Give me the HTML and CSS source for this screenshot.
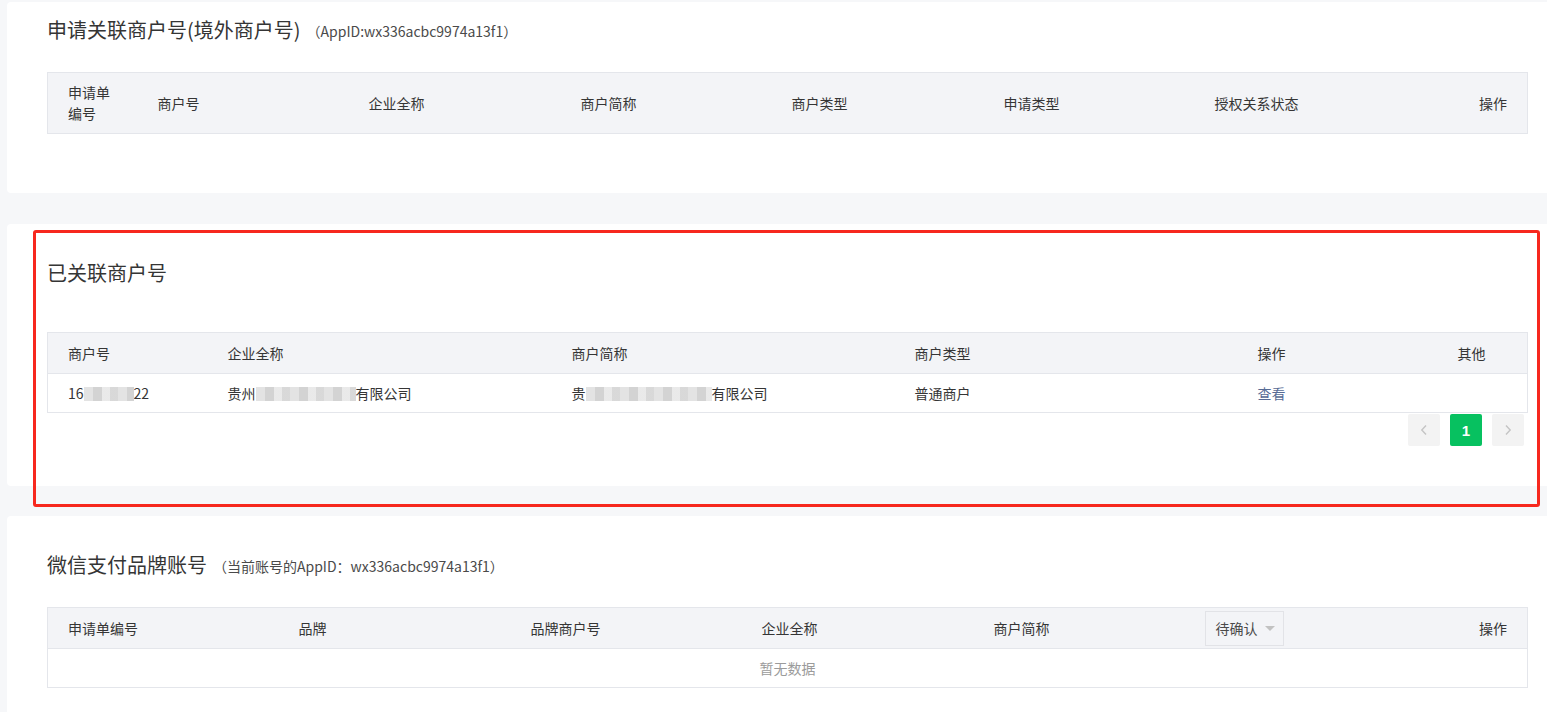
FILE: index.html
```html
<!DOCTYPE html>
<html lang="zh-CN">
<head>
    <meta charset="UTF-8">
    <meta name="viewport" content="width=device-width, initial-scale=1.0">
    <title>商户号管理</title>
    <link rel="stylesheet" href="styles.css">
</head>
<body>
    <div class="page">
        <!-- 申请关联 (境外) -->
        <div class="card card-first">
            <h2 class="card-title">申请关联商户号(境外商户号)<span class="sub">（AppID:wx336acbc9974a13f1）</span></h2>
            <table class="data-table">
                <colgroup>
                    <col style="width:90px">
                    <col style="width:211px">
                    <col style="width:212px">
                    <col style="width:211px">
                    <col style="width:212px">
                    <col style="width:211px">
                    <col style="width:212px">
                    <col>
                </colgroup>
                <thead>
                    <tr>
                        <th class="two-line">申请单编号</th>
                        <th>商户号</th>
                        <th>企业全称</th>
                        <th>商户简称</th>
                        <th>商户类型</th>
                        <th>申请类型</th>
                        <th>授权关系状态</th>
                        <th class="right">操作</th>
                    </tr>
                </thead>
            </table>
        </div>

        <!-- 已关联 -->
        <div class="card card-linked">
            <h2 class="card-title">已关联商户号</h2>
            <table class="data-table">
                <colgroup>
                    <col style="width:160px">
                    <col style="width:344px">
                    <col style="width:343px">
                    <col style="width:343px">
                    <col style="width:200px">
                    <col>
                </colgroup>
                <thead>
                    <tr>
                        <th>商户号</th>
                        <th>企业全称</th>
                        <th>商户简称</th>
                        <th>商户类型</th>
                        <th>操作</th>
                        <th>其他</th>
                    </tr>
                </thead>
                <tbody>
                    <tr>
                        <td>16<span class="blur" style="width:50px"></span>22</td>
                        <td>贵州<span class="blur" style="width:100px"></span>有限公司</td>
                        <td>贵<span class="blur" style="width:126px"></span>有限公司</td>
                        <td>普通商户</td>
                        <td><a href="#" class="link">查看</a></td>
                        <td></td>
                    </tr>
                </tbody>
            </table>
            <div class="pager">
                <button class="pager-btn" disabled>
                    <svg width="8" height="12" viewBox="0 0 8 12"><path d="M6 1.5 1.8 6 6 10.5" fill="none" stroke="#c4c4c4" stroke-width="1.4"/></svg>
                </button>
                <button class="pager-btn active">1</button>
                <button class="pager-btn" disabled>
                    <svg width="8" height="12" viewBox="0 0 8 12"><path d="M2 1.5 6.2 6 2 10.5" fill="none" stroke="#c4c4c4" stroke-width="1.4"/></svg>
                </button>
            </div>
        </div>

        <!-- 品牌账号 -->
        <div class="card card-brand">
            <h2 class="card-title">微信支付品牌账号<span class="sub">（当前账号的AppID：wx336acbc9974a13f1）</span></h2>
            <table class="data-table">
                <colgroup>
                    <col style="width:231px">
                    <col style="width:232px">
                    <col style="width:231px">
                    <col style="width:232px">
                    <col style="width:231px">
                    <col style="width:232px">
                    <col>
                </colgroup>
                <thead>
                    <tr>
                        <th>申请单编号</th>
                        <th>品牌</th>
                        <th>品牌商户号</th>
                        <th>企业全称</th>
                        <th>商户简称</th>
                        <th class="select-cell">
                            <span class="status-select">待确认<i class="caret"></i></span>
                        </th>
                        <th class="right">操作</th>
                    </tr>
                </thead>
                <tbody>
                    <tr>
                        <td colspan="7" class="empty">暂无数据</td>
                    </tr>
                </tbody>
            </table>
        </div>

        <div class="mark-box"></div>
    </div>
</body>
</html>
```

FILE: styles.css
```css
html, body {
    margin: 0;
    height: 100%;
    overflow: hidden;
}

body {
    background: #f6f7f9;
    font-family: "Noto Sans CJK SC", "Liberation Sans", sans-serif;
    color: #353535;
    font-size: 14px;
}

.page {
    position: relative;
    padding: 2px 0 0 7px;
    margin-right: -21px;
}

.card {
    background: #fff;
    border-radius: 4px;
    padding: 0 40px;
    margin-bottom: 30px;
}

.card-first {
    padding-top: 14px;
    height: 177px;
    margin-bottom: 31px;
}

.card-linked {
    padding-top: 35px;
    padding-bottom: 40px;
}

.card-brand {
    padding-top: 35px;
    padding-bottom: 40px;
}

.card-title {
    margin: 0 0 27px;
    font-size: 20px;
    font-weight: normal;
    line-height: 28px;
    color: #353535;
}

.card-linked .card-title {
    margin-bottom: 45px;
}

.card-title .sub {
    margin-left: 6px;
    font-size: 14px;
    color: #4a4a4a;
    vertical-align: 1px;
}

.data-table {
    width: 100%;
    table-layout: fixed;
    border-collapse: collapse;
    border: 1px solid #e4e6eb;
}

.data-table th {
    background: #f3f4f7;
    font-weight: normal;
    text-align: left;
    padding: 10px 20px;
    line-height: 20px;
    color: #353535;
    border-bottom: 1px solid #e4e6eb;
}

.data-table th.two-line {
    padding-top: 9px;
    padding-bottom: 9px;
    line-height: 21px;
}

.data-table .right {
    text-align: right;
}

.data-table td {
    padding: 9px 20px;
    line-height: 20px;
    white-space: nowrap;
    overflow: hidden;
}

.blur {
    display: inline-block;
    height: 14px;
    vertical-align: -2px;
    background: repeating-linear-gradient(90deg, #dcdcdc 0 9px, #c8c8c8 9px 18px, #e4e4e4 18px 26px, #cfcfcf 26px 34px);
    opacity: 0.8;
}

.link {
    color: #576b95;
    text-decoration: none;
}

.select-cell {
    padding-left: 0 !important;
}

.status-select {
    display: inline-block;
    box-sizing: border-box;
    width: 79px;
    height: 35px;
    line-height: 33px;
    padding-left: 10px;
    border: 1px solid #e2e3e7;
    color: #4a4a4a;
    margin: -8px 0;
}

.caret {
    display: inline-block;
    margin-left: 7px;
    width: 0;
    height: 0;
    border-left: 5px solid transparent;
    border-right: 5px solid transparent;
    border-top: 5px solid #c2c2c2;
    vertical-align: 3px;
}

.empty {
    text-align: center;
    color: #9b9b9b;
}

.pager {
    display: flex;
    justify-content: flex-end;
    gap: 10px;
    margin-top: 1px;
    padding-right: 4px;
}

.pager-btn {
    width: 32px;
    height: 32px;
    border: none;
    border-radius: 2px;
    background: #f3f3f3;
    padding: 0;
    display: flex;
    align-items: center;
    justify-content: center;
    font-family: "Liberation Sans", sans-serif;
    font-size: 15px;
    font-weight: bold;
}

.pager-btn.active {
    background: #07c160;
    color: #fff;
}

.mark-box {
    position: absolute;
    left: 33px;
    top: 230px;
    width: 1507px;
    height: 277px;
    box-sizing: border-box;
    border: 3px solid #f7281e;
    border-radius: 3px;
    pointer-events: none;
}
```
